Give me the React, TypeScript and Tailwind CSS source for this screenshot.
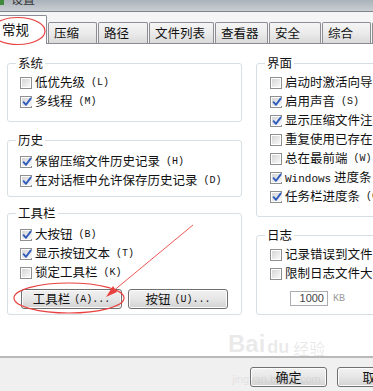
import React from 'react';

const mono = "font-['Liberation_Mono',monospace]";

const Box = ({ checked }: { checked?: boolean }) => (
  <span className="flex w-[12px] h-[12px] shrink-0 border border-[#8e8f8f] bg-white p-[1px]">
    <span className="flex flex-1 items-center justify-center bg-gradient-to-br from-[#d6d6d6] to-[#f8f8f8]">
      {checked && (
        <svg width="10" height="10" viewBox="0 0 10 10" className="overflow-visible">
          <path d="M1.6 5.2 L4 7.8 L8.6 1.6" fill="none" stroke="#2f5bbd" strokeWidth="1.9" strokeLinecap="round" strokeLinejoin="round" />
        </svg>
      )}
    </span>
  </span>
);

const Check = ({ label, hot, checked }: { label: React.ReactNode; hot?: string; checked?: boolean }) => (
  <div className="flex items-center h-[19px] gap-[3px] whitespace-nowrap">
    <Box checked={checked} />
    <span className="leading-none">{label}</span>
    {hot && <span className={`${mono} text-[10px] leading-none ml-[3px]`}>({hot})</span>}
  </div>
);

const Group = ({ title, className, children }: { title: string; className?: string; children: React.ReactNode }) => (
  <fieldset className={`border border-[#d5dfe5] rounded-[3px] ${className ?? ''}`}>
    <legend className="ml-[8px] px-[2px] leading-[14px]">{title}</legend>
    {children}
  </fieldset>
);

const tabs = [
  { name: '压缩', w: 'w-[49px]' },
  { name: '路径', w: 'w-[50px]' },
  { name: '文件列表', w: 'w-[65px]' },
  { name: '查看器', w: 'w-[53px]' },
  { name: '安全', w: 'w-[52px]' },
  { name: '综合', w: 'w-[49px]' },
  { name: '', w: 'w-[20px]' },
];

const WinButton = ({ children, className }: { children: React.ReactNode; className?: string }) => (
  <button className={`flex items-center justify-center h-[20px] rounded-[3px] border border-[#707070] bg-gradient-to-b from-[#f2f2f2] via-[#e6e6e6] to-[#d2d2d2] shadow-[inset_0_0_0_1px_#fcfcfc] whitespace-nowrap ${className ?? ''}`}>
    {children}
  </button>
);

export default function App() {
  return (
    <div className="relative w-[373px] h-[391px] overflow-hidden bg-white text-[12.5px] text-[#111] font-['Noto_Sans_CJK_SC',sans-serif]">
      {/* title bar, mostly cut off */}
      <div className="h-[12px] overflow-hidden bg-gradient-to-b from-[#aab2ba] to-[#c9ced3] border-b border-[#7c848c]">
        <div className="flex items-center gap-[7px] -mt-[8px]">
          <span className="w-[4px] h-[12px] bg-[#3f8a3a]" />
          <span className="text-[12px] leading-[14px] text-[#333]">设置</span>
        </div>
      </div>

      {/* tabs */}
      <div className="flex items-end gap-[1px] h-[32px] bg-[#f5f5f5] border-b border-[#898c95]">
        <div className="flex items-center shrink-0 whitespace-nowrap pl-[2px] pb-[2px] w-[47px] h-[29px] -mb-px bg-white border-t border-r border-[#898c95] rounded-tr-[2px] text-[13.5px]">
          常规
        </div>
        {tabs.map((t, i) => (
          <div
            key={i}
            className={`flex items-center pl-[5px] h-[21px] shrink-0 ${t.w} border-t border-l border-r border-[#8c8e94] rounded-t-[2px] bg-gradient-to-b from-[#f5f5f5] via-[#ebebeb] to-[#dadada] whitespace-nowrap`}
          >
            {t.name}
          </div>
        ))}
      </div>

      {/* panel */}
      <div className="flex h-[314px] pl-[7px] pt-[12px] border-b-2 border-[#b9b9b9]">
        <div className="flex flex-col w-[235px] shrink-0">
          <Group title="系统">
            <div className="pl-[12px] pt-[3px] pb-[10px]">
              <Check label="低优先级" hot="L" />
              <Check label="多线程" hot="M" checked />
            </div>
          </Group>
          <Group title="历史" className="mt-[11px]">
            <div className="pl-[12px] pt-[5px] pb-[6px]">
              <Check label="保留压缩文件历史记录" hot="H" checked />
              <Check label="在对话框中允许保存历史记录" hot="D" checked />
            </div>
          </Group>
          <Group title="工具栏" className="mt-[9px]">
            <div className="pl-[12px] pt-[5px] pb-[5px]">
              <Check label="大按钮" hot="B" checked />
              <Check label="显示按钮文本" hot="T" checked />
              <Check label="锁定工具栏" hot="K" />
              <div className="flex gap-[6px] mt-[7px] ml-[1px]">
                <WinButton className="w-[101px]">
                  工具栏<span className={`${mono} text-[10px] ml-[4px]`}>(A)...</span>
                </WinButton>
                <WinButton className="w-[100px]">
                  按钮<span className={`${mono} text-[10px] ml-[4px]`}>(U)...</span>
                </WinButton>
              </div>
            </div>
          </Group>
        </div>

        <div className="flex flex-col w-[150px] shrink-0 ml-[14px]">
          <Group title="界面">
            <div className="pl-[13px] pt-[3px] pb-[10px]">
              <Check label="启动时激活向导" hot="Z" />
              <Check label="启用声音" hot="S" checked />
              <Check label="显示压缩文件注释" hot="C" checked />
              <Check label="重复使用已存在的窗口" hot="R" />
              <Check label="总在最前端" hot="W" />
              <Check
                label={
                  <>
                    <span className={`${mono} text-[11px]`}>Windows</span> 进度条
                  </>
                }
                hot="P"
                checked
              />
              <Check label="任务栏进度条" hot="G" checked />
            </div>
          </Group>
          <Group title="日志" className="mt-[11px]">
            <div className="pl-[13px] pt-[3px] pb-[8px]">
              <Check label="记录错误到文件" hot="E" />
              <Check label="限制日志文件大小" hot="I" />
              <div className="flex items-center mt-[8px] ml-[20px]">
                <div className="flex items-center justify-end w-[38px] h-[15px] pr-[3px] border border-[#abadb3] bg-white text-[11px] font-['Liberation_Sans',sans-serif] text-[#444]">
                  1000
                </div>
                <span className={`${mono} text-[10px] ml-[5px] text-[#9a9a9a]`}>KB</span>
              </div>
            </div>
          </Group>
        </div>
      </div>

      {/* footer */}
      <div className="flex gap-[10px] h-[33px] pt-[9px] pl-[250px] bg-[#f0f0f0]">
        <WinButton className="w-[77px] shrink-0 border-[#3c7fb1] shadow-[inset_0_0_0_1px_#bfe4f8] text-[13px]">确定</WinButton>
        <WinButton className="w-[77px] shrink-0 text-[13px]">取消</WinButton>
      </div>

      {/* watermark */}
      <div className="absolute left-[228px] top-[332px] flex items-end gap-[2px] text-[rgba(170,170,170,0.25)] pointer-events-none">
        <span className="text-[24px] font-bold leading-none font-['Liberation_Sans',sans-serif]">Bai</span>
        <span className="text-[18px] font-bold leading-none font-['Liberation_Sans',sans-serif]">du</span>
        <span className="text-[16px] leading-none ml-[2px]">经验</span>
      </div>
      <div className="absolute left-[232px] top-[374px] text-[11px] leading-none text-[rgba(150,150,150,0.18)] font-['Liberation_Sans',sans-serif] pointer-events-none">
        jingyan.baidu.com
      </div>

      {/* red annotations */}
      <svg className="absolute inset-0 pointer-events-none" width="373" height="391" viewBox="0 0 373 391">
        <ellipse cx="18" cy="31" rx="27" ry="13.5" fill="none" stroke="#e8403f" strokeWidth="1.2" />
        <ellipse cx="69" cy="298" rx="55" ry="15" fill="none" stroke="#e8403f" strokeWidth="1.2" />
        <line x1="193" y1="225" x2="112" y2="292" stroke="#ee5555" strokeWidth="1" />
        <path d="M106 297 L113 286 L117 292 Z" fill="#e8403f" />
      </svg>
    </div>
  );
}
